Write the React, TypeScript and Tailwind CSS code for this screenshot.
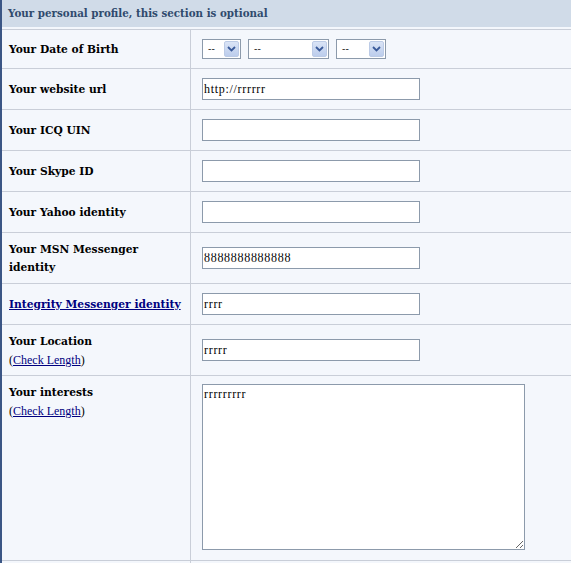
import type { ReactNode } from "react";

const serif = "font-['DejaVu_Serif',serif]";
const times = "font-['Liberation_Serif',serif]";

function Chevron() {
  return (
    <svg width="9" height="6" viewBox="0 0 9 6">
      <path d="M1 1l3.5 3.5L8 1" fill="none" stroke="#3a5a9a" strokeWidth="1.8" />
    </svg>
  );
}

function FakeSelect({ width }: { width: string }) {
  return (
    <div className={`flex h-[20px] items-center border border-[#8c9aab] bg-white ${width}`}>
      <span className="flex-1 pl-[5px] text-[10px] leading-none text-black">--</span>
      <span className="mr-[1px] flex h-[16px] w-[15px] items-center justify-center rounded-[2px] border border-[#bccbe6] bg-gradient-to-b from-[#dae4f6] to-[#bccdec]">
        <Chevron />
      </span>
    </div>
  );
}

function TextBox({ value = "" }: { value?: string }) {
  return (
    <input
      readOnly
      value={value}
      className={`h-[22px] w-[218px] border border-[#8c9aab] bg-white px-[1px] text-[12px] tracking-[0.7px] text-black outline-none ${times}`}
    />
  );
}

function Row({
  label,
  height,
  top = false,
  children,
}: {
  label: ReactNode;
  height: string;
  top?: boolean;
  children: ReactNode;
}) {
  return (
    <div className={`flex border-t border-[#c9ced8] ${height}`}>
      <div
        className={`flex w-[189px] flex-col whitespace-nowrap border-r border-[#c9ced8] pl-[7px] text-[10.7px] leading-[18px] text-black ${
          top ? "justify-start pt-[8px]" : "justify-center pt-[1px]"
        }`}
      >
        {label}
      </div>
      <div className={`flex flex-1 pl-[11px] ${top ? "items-start pt-[8px]" : "items-center"}`}>{children}</div>
    </div>
  );
}

function CheckLength() {
  return (
    <span className={`text-[12px] ${times}`}>
      (<a className="text-[#00007f] underline">Check Length</a>)
    </span>
  );
}

export default function App() {
  return (
    <div className={`h-[563px] w-[571px] overflow-hidden border-l-2 border-[#3b5685] bg-[#f4f7fc] ${serif}`}>
      <div className="flex h-[27px] items-center bg-[#d0dbe8] pl-[6px] text-[10.3px] font-bold text-[#2f4a6d]">
        Your personal profile, this section is optional
      </div>
      <div className="mt-[2px]">
        <Row height="h-[39px]" label={<b>Your Date of Birth</b>}>
          <div className="flex gap-[7px]">
            <FakeSelect width="w-[39px]" />
            <FakeSelect width="w-[81px]" />
            <FakeSelect width="w-[50px]" />
          </div>
        </Row>
        <Row height="h-[41px]" label={<b>Your website url</b>}>
          <TextBox value="http://rrrrrr" />
        </Row>
        <Row height="h-[41px]" label={<b>Your ICQ UIN</b>}>
          <TextBox />
        </Row>
        <Row height="h-[41px]" label={<b>Your Skype ID</b>}>
          <TextBox />
        </Row>
        <Row height="h-[41px]" label={<b>Your Yahoo identity</b>}>
          <TextBox />
        </Row>
        <Row
          height="h-[51px]"
          label={
            <b>
              Your MSN Messenger
              <br />
              identity
            </b>
          }
        >
          <TextBox value="ȣȣȣȣȣȣȣȣȣȣȣȣȣ" />
        </Row>
        <Row
          height="h-[41px]"
          label={<a className="font-bold text-[#00007f] underline">Integrity Messenger identity</a>}
        >
          <TextBox value="rrrr" />
        </Row>
        <Row
          height="h-[51px]"
          label={
            <>
              <b>Your Location</b>
              <CheckLength />
            </>
          }
        >
          <TextBox value="rrrrr" />
        </Row>
        <Row
          height="h-[185px]"
          top
          label={
            <>
              <b>Your interests</b>
              <CheckLength />
            </>
          }
        >
          <textarea
            readOnly
            value="rrrrrrrrr"
            className={`h-[166px] w-[323px] resize border border-[#8c9aab] bg-white px-[1px] py-[2px] text-[12px] leading-[14px] tracking-[0.7px] text-black outline-none ${times}`}
          />
        </Row>
        <div className="flex h-[20px] border-t border-[#c9ced8]">
          <div className="w-[189px] border-r border-[#c9ced8]" />
        </div>
      </div>
    </div>
  );
}
